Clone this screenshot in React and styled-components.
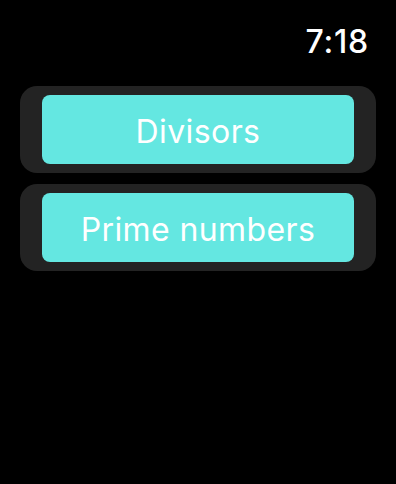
import React from "react"
import styled, { createGlobalStyle } from "styled-components"

const GlobalStyle = createGlobalStyle`
  html, body {
    margin: 0;
    padding: 0;
    background: #000;
  }
  body {
    font-family: Inter, "Noto Sans", sans-serif;
    color: #fff;
  }
`

const Screen = styled.div`
  width: 396px;
  height: 484px;
  background: #000;
  box-sizing: border-box;
  padding: 20px 20px 0 20px;
  display: flex;
  flex-direction: column;
`

const StatusBar = styled.div`
  display: flex;
  justify-content: flex-end;
  padding-right: 7px;
  height: 42px;
  align-items: center;
`

const Clock = styled.span`
  font-size: 32px;
  font-weight: 500;
  letter-spacing: 0.8px;
  color: #fff;
`

const List = styled.div`
  margin-top: 24px;
  display: flex;
  flex-direction: column;
  gap: 11px;
`

const Cell = styled.div`
  background: #232323;
  border-radius: 17px;
  padding: 9px 22px 9px 22px;
`

const Button = styled.button`
  width: 100%;
  height: 69px;
  border: none;
  border-radius: 8px;
  background: #64e7e1;
  color: #fff;
  font-family: Inter, "Noto Sans", sans-serif;
  font-size: 32px;
  font-weight: 400;
  letter-spacing: 0.4px;
  cursor: pointer;
  display: flex;
  align-items: center;
  justify-content: center;
  padding: 4px 0 0 0;
`

const items = ["Divisors", "Prime numbers"]

export default function App() {
  return (
    <>
      <GlobalStyle />
      <Screen>
        <StatusBar>
          <Clock>7:18</Clock>
        </StatusBar>
        <List>
          {items.map((label) => (
            <Cell key={label}>
              <Button>{label}</Button>
            </Cell>
          ))}
        </List>
      </Screen>
    </>
  )
}
